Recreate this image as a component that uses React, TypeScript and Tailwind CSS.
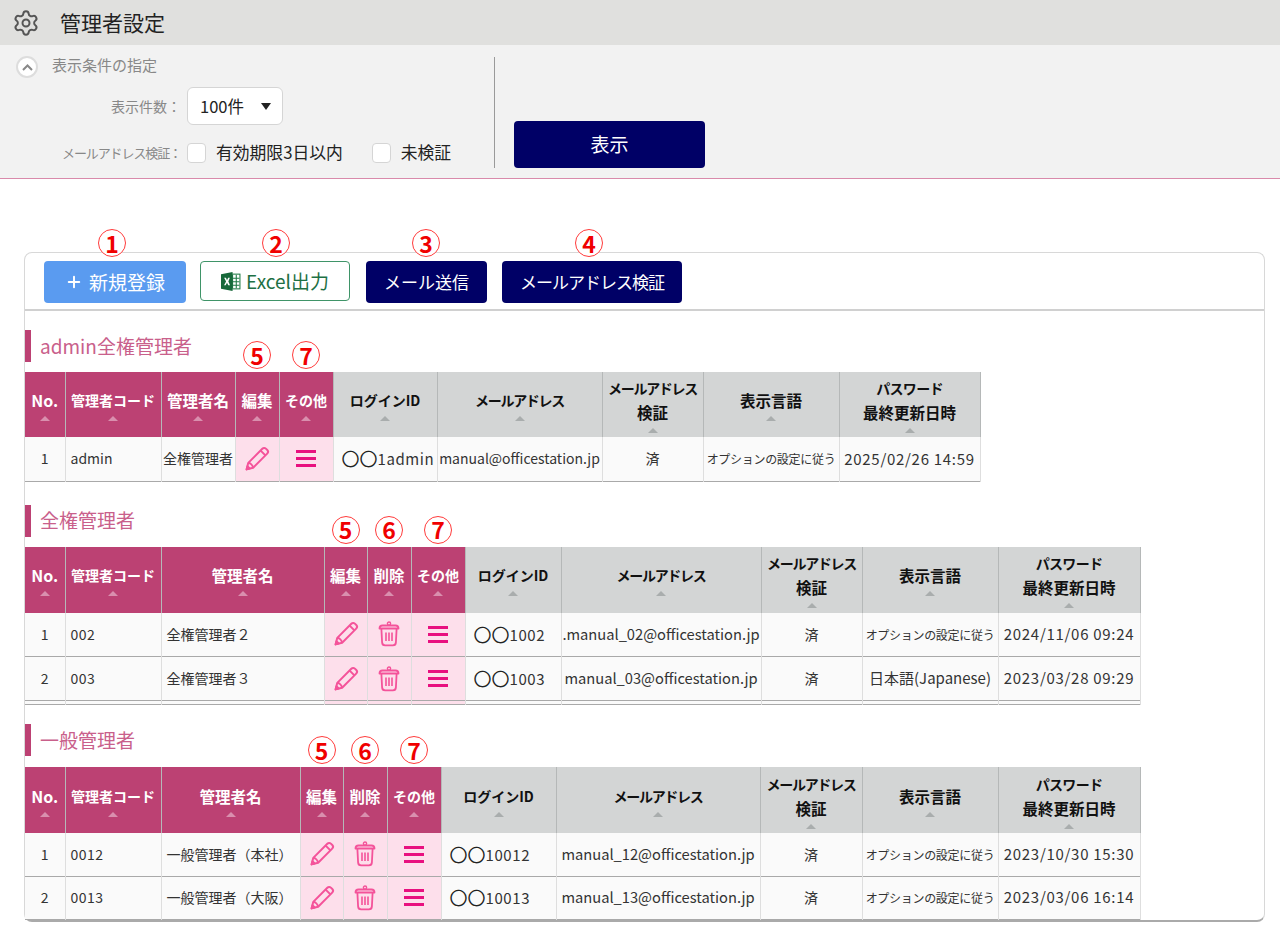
import { Plus, Settings } from "lucide-react";

const font = { fontFamily: '"Noto Sans CJK JP", sans-serif' };

type Col = {
  label: string[];
  width: number;
  pink?: boolean;
  left?: boolean;
  mark?: string;
};

function SortMark({ light }: { light?: boolean }) {
  return (
    <span
      className={`mx-auto mt-1 block h-0 w-0 border-x-[5px] border-b-[5px] border-x-transparent ${
        light ? "border-b-[#d98fae]" : "border-b-[#a9adad]"
      }`}
    />
  );
}

function Mark({ n, className }: { n: string; className?: string }) {
  return (
    <span
      className={`absolute flex h-[28px] w-[28px] items-center justify-center rounded-full border border-[#ff3b3b] bg-white text-[23px] font-bold leading-none text-[#f00000] ${className ?? ""}`}
    >
      {n}
    </span>
  );
}

function PencilIcon() {
  return (
    <svg width="26" height="26" viewBox="0 0 25 25" fill="none" stroke="#f4539a" strokeWidth="1.9" strokeLinejoin="round" className="mx-auto">
      <path d="M2.5 22.5l1.6-6.3L17.6 2.6c1-1 2.5-1 3.4-.1l1.4 1.4c.9.9.9 2.4-.1 3.4L8.8 20.9z" />
      <path d="M4.1 16.2c2 .2 4.2 2.3 4.7 4.7" />
      <path d="M16 4.4l4.6 4.6" />
      <path d="M2.5 22.5l3-.8-2.2-2.2z" fill="#f4539a" />
    </svg>
  );
}

function TrashIcon() {
  return (
    <svg width="22" height="26" viewBox="0 0 22 26" fill="none" stroke="#f4539a" strokeWidth="1.8" strokeLinejoin="round" strokeLinecap="round" className="mx-auto">
      <circle cx="11" cy="2.6" r="1.6" strokeWidth="1.4" />
      <path d="M1.5 7.5c0-2 1-3 3-3h13c2 0 3 1 3 3z" fill="#fddfeb" />
      <path d="M3.4 8l.7 13.4c.1 1.9 1.2 3 3 3h7.8c1.8 0 2.9-1.1 3-3L18.6 8" />
      <path d="M8 11.5v8.5M11 11.5v8.5M14 11.5v8.5" strokeWidth="1.6" strokeLinecap="butt" />
    </svg>
  );
}

function MenuIcon() {
  return (
    <div className="mx-auto flex w-[20px] flex-col gap-[4px]">
      <span className="h-[3px] bg-[#e8107f]" />
      <span className="h-[3px] bg-[#e8107f]" />
      <span className="h-[3px] bg-[#e8107f]" />
    </div>
  );
}

function ExcelIcon() {
  return (
    <svg width="20" height="19" viewBox="0 0 19 18" className="mr-[5px] shrink-0">
      <rect x="7" y="2" width="11" height="14" fill="#fff" stroke="#1f7a45" strokeWidth="1" />
      <path d="M11 2.5v13M14.5 2.5v13M7.5 6h10M7.5 9.2h10M7.5 12.5h10" stroke="#1f7a45" strokeWidth="1" />
      <path d="M0 2l11-2v18L0 16z" fill="#17693a" />
      <path d="M3 5.5l1.7 0 1 2.2 1.1-2.2h1.6L7 9l1.6 3.5H6.9L5.7 10.2 4.5 12.5H2.9L4.8 9z" fill="#fff" />
    </svg>
  );
}

function ActionCell({ kind }: { kind: string }) {
  if (kind === "edit") return <PencilIcon />;
  if (kind === "del") return <TrashIcon />;
  return <MenuIcon />;
}

function labelClass(l: string) {
  if (l === "No.") return "text-[16px]";
  if (l === "メールアドレス") return "text-[14px] tracking-[-1.3px]";
  if (l === "パスワード") return "text-[14px] tracking-[-0.7px]";
  if (l === "ログインID" || l === "管理者コード" || l === "その他") return "text-[14px]";
  return "text-[15.5px]";
}

function CellText({ v }: { v: string }) {
  if (v === "オプションの設定に従う") return <span className="text-[12px] tracking-[-0.3px]">{v}</span>;
  if (v.startsWith("〇〇"))
    return (
      <span className="text-[15px] tracking-[0.6px]">
        <span className="align-[-1px] text-[18px] tracking-normal text-[#222]">〇〇</span>
        {v.slice(2)}
      </span>
    );
  if (v.startsWith("manual_") || v.startsWith(".manual_")) return <span className="text-[14.7px]">{v}</span>;
  if (v.startsWith("日本語")) return <span className="text-[15px]">{v}</span>;
  if (/^\d{4}\//.test(v)) return <span className="text-[15px] tracking-[0.7px]">{v}</span>;
  if (/^\d{3,4}$/.test(v)) return <span className="tracking-[0.5px]">{v}</span>;
  return <>{v}</>;
}

function AdminTable({
  cols,
  rows,
  rowHeights,
  headHeight,
  tailRow,
}: {
  cols: Col[];
  rows: string[][];
  rowHeights: number[];
  headHeight: number;
  tailRow?: boolean;
}) {
  const total = cols.reduce((s, c) => s + c.width, 0);
  return (
    <table className="table-fixed border-collapse" style={{ width: total }}>
      <colgroup>
        {cols.map((c, i) => (
          <col key={i} style={{ width: c.width }} />
        ))}
      </colgroup>
      <thead>
        <tr style={{ height: headHeight }}>
          {cols.map((c, i) => (
            <th
              key={i}
              className={`relative border-r border-[#b5b8b8] p-0 text-center align-middle font-bold leading-[24px] ${
                c.pink ? "bg-[#bc4173] text-white" : "bg-[#d3d5d5] text-[#111]"
              }`}
            >
              {c.mark && <Mark n={c.mark} className="-top-[31px] left-1/2 -translate-x-1/2" />}
              {c.label.map((l, j) => (
                <span key={j} className={`block whitespace-nowrap ${labelClass(l)}`}>
                  {l}
                </span>
              ))}
              <SortMark light={c.pink} />
            </th>
          ))}
        </tr>
      </thead>
      <tbody>
        {rows.map((r, ri) => (
          <tr key={ri} style={{ height: rowHeights[ri] }} className="border-b border-[#a9a9a9]">
            {cols.map((c, ci) => {
              const v = r[ci];
              const action = v === "edit" || v === "del" || v === "menu";
              const id = v.startsWith("〇〇");
              return (
                <td
                  key={ci}
                  className={`overflow-hidden whitespace-nowrap border-r border-[#dedede] p-0 text-[14px] text-[#333] ${
                    action ? "bg-[#fddfeb]" : "bg-[#fafafa]"
                  } ${id ? "pl-[8px] text-left" : c.left ? "pl-[5px] text-left" : "text-center"}`}
                >
                  {action ? <ActionCell kind={v} /> : <CellText v={v} />}
                </td>
              );
            })}
          </tr>
        ))}
        {tailRow && (
          <tr className="h-[4px] border-b border-[#a9a9a9]">
            {cols.map((c, ci) => (
              <td
                key={ci}
                className={`border-r border-[#dedede] p-0 ${
                  c.label[0] === "編集" || c.label[0] === "削除" || c.label[0] === "その他" ? "bg-[#fddfeb]" : "bg-[#fafafa]"
                }`}
              />
            ))}
          </tr>
        )}
      </tbody>
    </table>
  );
}

function Heading({ text, className }: { text: string; className?: string }) {
  return (
    <h2
      className={`flex h-[32px] items-center border-l-[6px] border-[#bc4173] pl-[9px] text-[19px] font-normal text-[#c9608b] ${className ?? ""}`}
    >
      {text}
    </h2>
  );
}

const rest = (w: number[]): Col[] => [
  { label: ["ログインID"], width: w[0] },
  { label: ["メールアドレス"], width: w[1] },
  { label: ["メールアドレス", "検証"], width: w[2] },
  { label: ["表示言語"], width: w[3] },
  { label: ["パスワード", "最終更新日時"], width: w[4] },
];

const adminCols: Col[] = [
  { label: ["No."], width: 40, pink: true },
  { label: ["管理者コード"], width: 96, pink: true, left: true },
  { label: ["管理者名"], width: 74, pink: true },
  { label: ["編集"], width: 44, pink: true, mark: "5" },
  { label: ["その他"], width: 54, pink: true, mark: "7" },
  ...rest([104, 165, 101, 136, 141]),
];

const fullCols: Col[] = [
  { label: ["No."], width: 40, pink: true },
  { label: ["管理者コード"], width: 96, pink: true, left: true },
  { label: ["管理者名"], width: 163, pink: true, left: true },
  { label: ["編集"], width: 43, pink: true, mark: "5" },
  { label: ["削除"], width: 44, pink: true, mark: "6" },
  { label: ["その他"], width: 54, pink: true, mark: "7" },
  ...rest([96, 200, 101, 136, 142]),
];

const generalCols: Col[] = [
  { label: ["No."], width: 40, pink: true },
  { label: ["管理者コード"], width: 96, pink: true, left: true },
  { label: ["管理者名"], width: 139, pink: true, left: true },
  { label: ["編集"], width: 43, pink: true, mark: "5" },
  { label: ["削除"], width: 44, pink: true, mark: "6" },
  { label: ["その他"], width: 54, pink: true, mark: "7" },
  ...rest([115, 204, 102, 136, 142]),
];

const opt = "オプションの設定に従う";

export default function App() {
  return (
    <div className="min-h-[928px] bg-white text-[#222]" style={font}>
      <header className="flex h-[45px] items-center bg-[#e0e0de] pl-[12px]">
        <Settings size={28} strokeWidth={1.7} className="text-[#555]" />
        <h1 className="ml-[20px] text-[21px] font-normal text-[#222]">管理者設定</h1>
      </header>

      <section className="flex h-[134px] border-b border-[#d98aab] bg-[#f2f2f2]">
        <div className="w-[495px] pt-[12px]">
          <div className="h-[111px] border-r border-[#9a9a9a]">
            <div className="flex h-[20px] items-center pl-[16px]">
              <span className="flex h-[22px] w-[22px] items-center justify-center rounded-full border-2 border-[#ddd] bg-white">
                <svg width="11" height="7" viewBox="0 0 11 7" fill="none" stroke="#888" strokeWidth="2">
                  <path d="M1 6l4.5-4.5L10 6" />
                </svg>
              </span>
              <span className="ml-[14px] -translate-y-[2px] text-[15px] text-[#888]">表示条件の指定</span>
            </div>
            <div className="mt-[10px] flex items-center">
              <span className="w-[181px] text-right text-[14px] text-[#888]">表示件数：</span>
              <div className="ml-[6px] flex h-[38px] w-[96px] items-center rounded-md border border-[#d5d5d5] bg-white pl-[12px] text-[16.5px] text-[#222]">
                100件
                <span className="ml-[17px] h-0 w-0 border-x-[5px] border-t-[7px] border-x-transparent border-t-[#222]" />
              </div>
            </div>
            <div className="mt-[15px] flex items-center text-[16.8px]">
              <span className="w-[181px] whitespace-nowrap text-right text-[13px] tracking-[-1.1px] text-[#888]">
                メールアドレス検証：
              </span>
              <span className="ml-[6px] h-[20px] w-[19px] rounded border border-[#d5d5d5] bg-white" />
              <span className="ml-[10px]">有効期限3日以内</span>
              <span className="ml-[29px] h-[20px] w-[19px] rounded border border-[#d5d5d5] bg-white" />
              <span className="ml-[10px]">未検証</span>
            </div>
          </div>
        </div>
        <div className="pl-[19px] pt-[76px]">
          <button className="h-[47px] w-[191px] rounded bg-[#000066] text-[19px] text-white">表示</button>
        </div>
      </section>

      <div className="pl-[24px] pt-[73px]">
        <div className="w-[1241px] rounded-lg border border-b-2 border-[#d8d8d8] border-b-[#aaa]">
          <div className="flex h-[58px] items-start gap-[14px] border-b-2 border-[#d0d0d0] pl-[19px] pt-[8px]">
            <div className="relative">
              <Mark n="1" className="-top-[32px] left-[54px]" />
              <button className="flex h-[42px] w-[142px] items-center justify-center rounded bg-[#5a9bf0] text-[19px] text-white">
                <Plus size={18} strokeWidth={2.6} className="mr-[6px]" />
                新規登録
              </button>
            </div>
            <div className="relative">
              <Mark n="2" className="-top-[32px] left-[62px]" />
              <button className="flex h-[40px] w-[150px] items-center justify-center rounded border border-[#3f9468] bg-white text-[19px] text-[#1d7044]">
                <ExcelIcon />
                Excel出力
              </button>
            </div>
            <div className="relative ml-[2px]">
              <Mark n="3" className="-top-[32px] left-[46px]" />
              <button className="h-[42px] w-[121px] rounded bg-[#000066] text-[17px] text-white">メール送信</button>
            </div>
            <div className="relative ml-[1px]">
              <Mark n="4" className="-top-[32px] left-[73px]" />
              <button className="h-[42px] w-[180px] rounded bg-[#000066] text-[17px] tracking-[-1px] text-white">
                メールアドレス検証
              </button>
            </div>
          </div>

          <Heading text="admin全権管理者" className="mt-[19px]" />
          <div className="mt-[10px]">
            <AdminTable
              cols={adminCols}
              headHeight={65}
              rowHeights={[44]}
              rows={[["1", "admin", "全権管理者", "edit", "menu", "〇〇1admin", "manual@officestation.jp", "済", opt, "2025/02/26 14:59"]]}
            />
          </div>

          <Heading text="全権管理者" className="mt-[23px]" />
          <div className="mt-[10px]">
            <AdminTable
              cols={fullCols}
              headHeight={66}
              rowHeights={[44, 44]}
              tailRow
              rows={[
                ["1", "002", "全権管理者２", "edit", "del", "menu", "〇〇1002", ".manual_02@officestation.jp", "済", opt, "2024/11/06 09:24"],
                ["2", "003", "全権管理者３", "edit", "del", "menu", "〇〇1003", "manual_03@officestation.jp", "済", "日本語(Japanese)", "2023/03/28 09:29"],
              ]}
            />
          </div>

          <Heading text="一般管理者" className="mt-[19px]" />
          <div className="mt-[11px]">
            <AdminTable
              cols={generalCols}
              headHeight={66}
              rowHeights={[43, 43]}
              rows={[
                ["1", "0012", "一般管理者（本社）", "edit", "del", "menu", "〇〇10012", "manual_12@officestation.jp", "済", opt, "2023/10/30 15:30"],
                ["2", "0013", "一般管理者（大阪）", "edit", "del", "menu", "〇〇10013", "manual_13@officestation.jp", "済", opt, "2023/03/06 16:14"],
              ]}
            />
          </div>
        </div>
      </div>
    </div>
  );
}
